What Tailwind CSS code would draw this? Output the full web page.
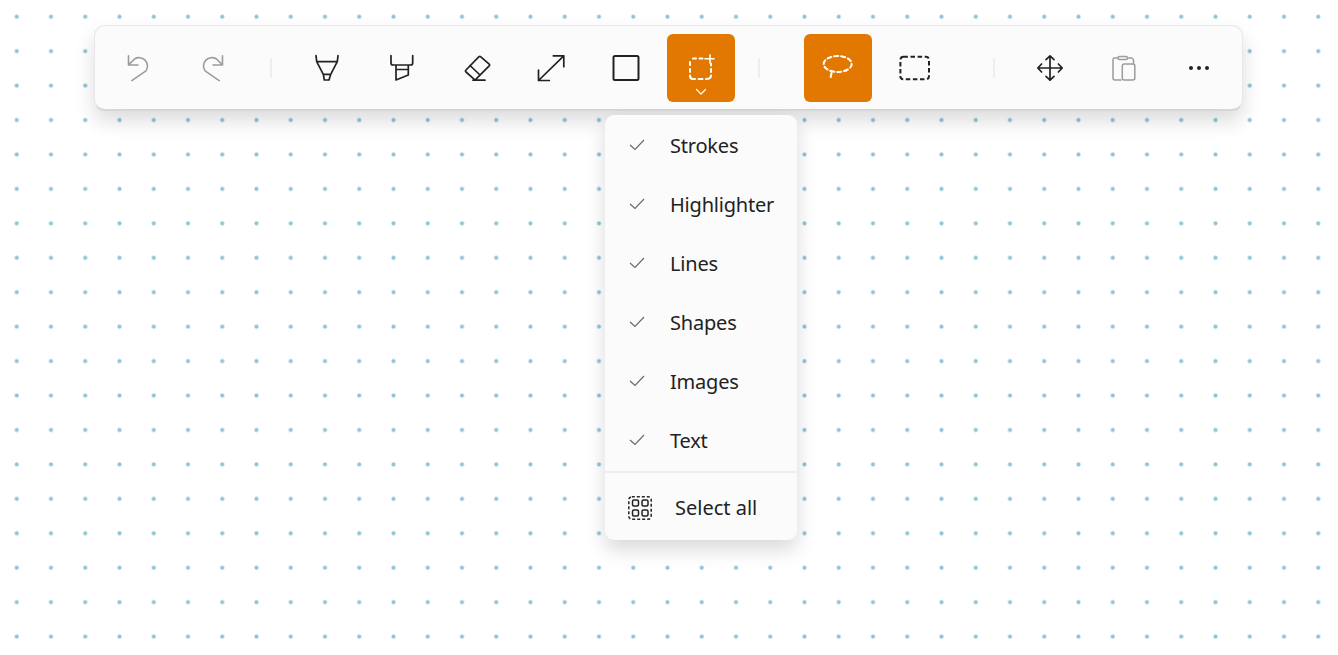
<!DOCTYPE html>
<html lang="en">
<head>
    <meta charset="UTF-8">
    <meta name="viewport" content="width=device-width, initial-scale=1.0">
    <title>Whiteboard toolbar</title>
    <script src="https://cdn.jsdelivr.net/npm/@tailwindcss/browser@4"></script>
</head>
<body class="bg-white font-['Noto_Sans',sans-serif] text-[#222222]">

    <!-- Dotted canvas -->
    <div class="relative w-[1338px] h-[655px] overflow-hidden pt-[25px] pl-[94px] bg-[radial-gradient(circle,#8fc3d6_1.5px,#d5e9f0_2.1px,transparent_2.8px)] bg-[length:34.25px_34.45px] bg-[position:-0.4px_-0.5px]">

        <!-- Toolbar -->
        <div class="flex items-center w-[1149px] h-[86px] pl-[10px] pt-px bg-[#fbfbfb] border border-[#e8e8e8] border-b-2 border-b-[#d6d6d6] rounded-[11px] shadow-[0_10px_20px_rgba(0,0,0,0.14)]">
            <!-- History -->
            <div class="flex gap-[5px]">
                <button class="flex items-center justify-center w-[68px] h-[68px]">
                    <svg class="w-[28px] h-[28px]" viewBox="0 0 28 28" fill="none" stroke="#9c9c9c" stroke-width="1.6" stroke-linecap="round" stroke-linejoin="round"><path d="M3.5 1.8V11H13M3.8 10.6 9.5 5A8.4 8.4 0 0 1 21 16.8L6.8 26.6"/></svg>
                </button>
                <button class="flex items-center justify-center w-[68px] h-[68px]">
                    <svg class="w-[28px] h-[28px] -scale-x-100" viewBox="0 0 28 28" fill="none" stroke="#9c9c9c" stroke-width="1.6" stroke-linecap="round" stroke-linejoin="round"><path d="M3.5 1.8V11H13M3.8 10.6 9.5 5A8.4 8.4 0 0 1 21 16.8L6.8 26.6"/></svg>
                </button>
            </div>
            <div class="w-[2px] h-[20px] ml-[24px] bg-[#eeeeee]"></div>

            <!-- Drawing tools -->
            <div class="flex gap-[6.8px] ml-[21px]">
                <button class="flex items-center justify-center w-[68px] h-[68px]">
                    <svg class="w-[28px] h-[28px]" viewBox="0 0 28 28" fill="none" stroke="#222222" stroke-width="1.7" stroke-linecap="round" stroke-linejoin="round"><path d="M3 1.7 3.7 7.7H24.3L25 1.7M3.7 7.7 10.3 20.3H17.7L24.3 7.7M10.3 20.3 11.3 26H16L17.7 20.3"/></svg>
                </button>
                <button class="flex items-center justify-center w-[68px] h-[68px]">
                    <svg class="w-[28px] h-[28px]" viewBox="0 0 28 28" fill="none" stroke="#222222" stroke-width="1.7" stroke-linecap="round" stroke-linejoin="round"><path d="M3 1.7V9Q3 11 5 11H22.7Q24.7 11 24.7 9V1.7M8 11V26L20.3 21V11M8 15.5H20.3"/></svg>
                </button>
                <button class="flex items-center justify-center w-[68px] h-[68px]">
                    <svg class="w-[28px] h-[28px]" viewBox="0 0 28 28" fill="none" stroke="#222222" stroke-width="1.7" stroke-linecap="round" stroke-linejoin="round"><path d="M17.5 2.6 26.2 10.2Q27 11 26.2 11.9L13 25.2Q12 26.2 11 25.2L3 18Q2 17 3 16L16 2.6Q16.8 2 17.5 2.6ZM7 11.5 17 21M10 26.2H22"/></svg>
                </button>
                <button class="flex items-center justify-center w-[68px] h-[68px]">
                    <svg class="w-[28px] h-[28px]" viewBox="0 0 28 28" fill="none" stroke="#222222" stroke-width="1.7" stroke-linecap="round" stroke-linejoin="round"><path d="M1.5 26.5 26.8 1.8M16.3 1.8H26.8V12.7M1.5 16V26.5H12.3"/></svg>
                </button>
                <button class="flex items-center justify-center w-[68px] h-[68px]">
                    <svg class="w-[28px] h-[28px]" viewBox="0 0 28 28" fill="none" stroke="#222222" stroke-width="2"><rect x="1.5" y="2" width="25" height="24" rx="1.5"/></svg>
                </button>
                <button class="relative flex items-center justify-center w-[68px] h-[68px] bg-[#e37800] rounded-[6px]">
                    <svg class="w-[28px] h-[28px]" viewBox="0 0 28 28" fill="none" stroke="#ffffff" stroke-width="2" stroke-linecap="round"><path d="M6 4.5H9M12.5 4.5H15.5M3 8V11M3 15V18M3 21.5Q3 25 6 25H8M11.5 25H15.5M19 25Q24 25 24 21.5M24 18V15M24 11.5V9.5"/><path stroke-width="1.6" d="M18 4.7H27M23 1V9"/></svg>
                    <svg class="absolute left-[28px] top-[54px] w-[12px] h-[8px]" viewBox="0 0 12 8" fill="none" stroke="#ffffff" stroke-width="1.2" stroke-linecap="round" stroke-linejoin="round"><path d="M1.5 1.5 6 6 10.5 1.5"/></svg>
                </button>
            </div>
            <div class="w-[2px] h-[20px] ml-[23px] bg-[#eeeeee]"></div>

            <!-- Selection -->
            <div class="flex gap-[9px] ml-[44px]">
                <button class="flex items-center justify-center w-[68px] h-[68px] bg-[#e37800] rounded-[6px]">
                    <svg class="w-[36px] h-[28px]" viewBox="0 0 36 28" fill="none" stroke="#ffffff" stroke-width="2.1" stroke-linecap="round" stroke-dasharray="4 3"><ellipse cx="17.7" cy="10" rx="14" ry="8"/><path d="M11.5 19 10.2 25.6"/></svg>
                </button>
                <button class="flex items-center justify-center w-[68px] h-[68px]">
                    <svg class="w-[32px] h-[28px]" viewBox="0 0 32 28" fill="none" stroke="#222222" stroke-width="2" stroke-dasharray="4.5 2.6"><rect x="1.4" y="2.8" width="28.6" height="22.4" rx="3"/></svg>
                </button>
            </div>
            <div class="w-[2px] h-[20px] ml-[44px] bg-[#eeeeee]"></div>

            <!-- Move, paste, more -->
            <div class="flex gap-[6.5px] ml-[21px]">
                <button class="flex items-center justify-center w-[68px] h-[68px]">
                    <svg class="w-[28px] h-[28px]" viewBox="0 0 28 28" fill="none" stroke="#222222" stroke-width="1.7" stroke-linecap="round" stroke-linejoin="round"><path d="M14 1.8V26.2M1.8 14H26.2M10 5.6 14 1.8 18 5.6M10 22.4 14 26.2 18 22.4M5.6 10 1.8 14 5.6 18M22.4 10 26.2 14 22.4 18"/></svg>
                </button>
                <button class="flex items-center justify-center w-[68px] h-[68px]">
                    <svg class="w-[28px] h-[28px]" viewBox="0 0 28 28" fill="none" stroke="#9c9c9c" stroke-width="1.5" stroke-linecap="round" stroke-linejoin="round"><path d="M7.5 4H4.5Q3 4 3 5.5V24Q3 26 5 26H11M18 4H21.5Q23 4 23.5 6V10"/><rect x="8" y="2.6" width="9.5" height="3" rx="1.5"/><rect x="12.3" y="10" width="12.5" height="16" rx="2"/></svg>
                </button>
                <button class="flex items-center justify-center w-[68px] h-[68px]">
                    <svg class="w-[28px] h-[28px]" viewBox="0 0 28 28" fill="#222222"><circle cx="6" cy="14" r="2"/><circle cx="14" cy="14" r="2"/><circle cx="22" cy="14" r="2"/></svg>
                </button>
            </div>
        </div>

        <!-- Selection filter menu -->
        <div class="absolute left-[605px] top-[115px] w-[192px] h-[425px] pt-px bg-[#fbfbfb] rounded-[9px] shadow-[0_10px_20px_rgba(0,0,0,0.15)] text-[20px] tracking-[-0.2px]">
            <ul>
                <li class="flex items-center h-[59px] pl-[24px]">
                    <svg class="w-[16px] h-[12px] -mt-[2px]" viewBox="0 0 16 12" fill="none" stroke="#666666" stroke-width="1.1"><path d="M1 6 6 10.5 15 1"/></svg>
                    <span class="ml-[25px]">Strokes</span>
                </li>
                <li class="flex items-center h-[59px] pl-[24px]">
                    <svg class="w-[16px] h-[12px] -mt-[2px]" viewBox="0 0 16 12" fill="none" stroke="#666666" stroke-width="1.1"><path d="M1 6 6 10.5 15 1"/></svg>
                    <span class="ml-[25px]">Highlighter</span>
                </li>
                <li class="flex items-center h-[59px] pl-[24px]">
                    <svg class="w-[16px] h-[12px] -mt-[2px]" viewBox="0 0 16 12" fill="none" stroke="#666666" stroke-width="1.1"><path d="M1 6 6 10.5 15 1"/></svg>
                    <span class="ml-[25px]">Lines</span>
                </li>
                <li class="flex items-center h-[59px] pl-[24px]">
                    <svg class="w-[16px] h-[12px] -mt-[2px]" viewBox="0 0 16 12" fill="none" stroke="#666666" stroke-width="1.1"><path d="M1 6 6 10.5 15 1"/></svg>
                    <span class="ml-[25px]">Shapes</span>
                </li>
                <li class="flex items-center h-[59px] pl-[24px]">
                    <svg class="w-[16px] h-[12px] -mt-[2px]" viewBox="0 0 16 12" fill="none" stroke="#666666" stroke-width="1.1"><path d="M1 6 6 10.5 15 1"/></svg>
                    <span class="ml-[25px]">Images</span>
                </li>
                <li class="flex items-center h-[59px] pl-[24px]">
                    <svg class="w-[16px] h-[12px] -mt-[2px]" viewBox="0 0 16 12" fill="none" stroke="#666666" stroke-width="1.1"><path d="M1 6 6 10.5 15 1"/></svg>
                    <span class="ml-[25px]">Text</span>
                </li>
            </ul>
            <div class="h-[2px] mt-[1px] bg-[#eeeeee]"></div>
            <div class="flex items-center h-[70px] pl-[23px]">
                <svg class="w-[24px] h-[24px]" viewBox="0 0 24 24" fill="none" stroke="#222222" stroke-width="1.5"><rect x="0.8" y="0.8" width="22.4" height="22.4" rx="3" stroke-dasharray="3 2"/><rect x="4.5" y="4" width="6" height="6" rx="1.5"/><rect x="14" y="4" width="6" height="6" rx="1.5"/><rect x="4.5" y="14" width="6" height="6" rx="1.5"/><rect x="14" y="14" width="6" height="6" rx="1.5"/></svg>
                <span class="ml-[23px] tracking-normal">Select all</span>
            </div>
        </div>
    </div>

</body>
</html>
